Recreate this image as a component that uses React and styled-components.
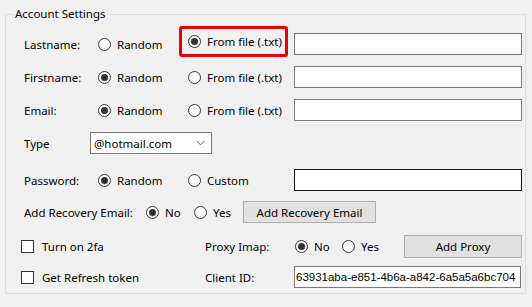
import styled, { createGlobalStyle } from "styled-components";

const GlobalStyle = createGlobalStyle`
    html, body {
        margin: 0;
        background: #f0f0f0;
    }
    body {
        font-family: "Noto Sans", "Open Sans", sans-serif;
        font-size: 11.5px;
        color: #000;
    }
`

const Page = styled.div`
    width: 532px;
    height: 307px;
    overflow: hidden;
    box-sizing: border-box;
    padding: 6px 6px 0 5px;
`

const Group = styled.fieldset`
    margin: 0;
    padding: 0 0 5px 0;
    border: 1px solid #dcdcdc;
    min-width: 0;
`

const Legend = styled.legend`
    margin-left: 7px;
    padding: 0 2px;
    line-height: 16px;
`

const Row = styled.div`
    display: flex;
    align-items: center;
    height: ${props => props.$h || 22}px;
    margin-top: ${props => props.$mt}px;
    padding-left: ${props => props.$pl || 18}px;
`

const Label = styled.span`
    width: ${props => props.$w}px;
    flex-shrink: 0;
    white-space: nowrap;
`

const Option = styled.label`
    display: flex;
    align-items: center;
    gap: 6px;
    width: ${props => props.$w ? props.$w + "px" : "auto"};
    flex-shrink: 0;
    white-space: nowrap;
`

const Circle = styled.span`
    width: 13px;
    height: 13px;
    box-sizing: border-box;
    border: 1px solid #333;
    border-radius: 50%;
    background: #fff;
    display: flex;
    align-items: center;
    justify-content: center;
    &::after {
        content: "";
        width: 7px;
        height: 7px;
        border-radius: 50%;
        background: #333;
        display: ${props => props.$on ? "block" : "none"};
    }
`

const Box = styled.span`
    width: 13px;
    height: 13px;
    box-sizing: border-box;
    border: 1px solid #333;
    background: #fff;
`

const Check = styled.label`
    display: flex;
    align-items: center;
    gap: 8px;
    width: ${props => props.$w}px;
    flex-shrink: 0;
`

const Highlight = styled.div`
    display: flex;
    align-items: center;
    box-sizing: border-box;
    width: 109px;
    height: 31px;
    margin: -7px 6px -2px -9px;
    padding-left: 6px;
    border: 3px solid #e8000b;
    border-radius: 3px;
    flex-shrink: 0;
`

const Field = styled.div`
    box-sizing: border-box;
    width: ${props => props.$w || 228}px;
    height: 22px;
    background: #fff;
    border: 1px solid ${props => props.$dark ? "#111" : "#7a7a7a"};
    font-family: "Liberation Sans", Arial, sans-serif;
    font-size: 11.5px;
    line-height: 20px;
    padding-left: 1px;
    white-space: nowrap;
    overflow: hidden;
`

const Select = styled.div`
    box-sizing: border-box;
    width: 122px;
    height: 22px;
    background: #fff;
    border: 1px solid #7a7a7a;
    display: flex;
    align-items: center;
    justify-content: space-between;
    padding: 0 6px 0 3px;
`

const Button = styled.div`
    box-sizing: border-box;
    width: ${props => props.$w}px;
    height: ${props => props.$h || 22}px;
    background: #e1e1e1;
    border: 1px solid #adadad;
    display: flex;
    align-items: center;
    justify-content: center;
    margin-left: ${props => props.$ml || 0}px;
`

const Radio = ({ on, w, children }) => (
    <Option $w={w}>
        <Circle $on={on} />
        {children}
    </Option>
)

const App = () => {
    return (
        <Page>
            <GlobalStyle />
            <Group>
                <Legend>Account Settings</Legend>

                <Row $mt={11}>
                    <Label $w={74}>Lastname:</Label>
                    <Radio w={90}>Random</Radio>
                    <Highlight>
                        <Radio on>From file (.txt)</Radio>
                    </Highlight>
                    <Field />
                </Row>

                <Row $mt={11}>
                    <Label $w={74}>Firstname:</Label>
                    <Radio on w={90}>Random</Radio>
                    <Radio w={106}>From file (.txt)</Radio>
                    <Field />
                </Row>

                <Row $mt={11}>
                    <Label $w={74}>Email:</Label>
                    <Radio on w={90}>Random</Radio>
                    <Radio w={106}>From file (.txt)</Radio>
                    <Field />
                </Row>

                <Row $mt={11}>
                    <Label $w={66}>Type</Label>
                    <Select>
                        <span>@hotmail.com</span>
                        <svg width="9" height="6" viewBox="0 0 9 6">
                            <path d="M0.5 0.8 L4.5 4.8 L8.5 0.8" fill="none" stroke="#555" strokeWidth="1" />
                        </svg>
                    </Select>
                </Row>

                <Row $mt={15}>
                    <Label $w={74}>Password:</Label>
                    <Radio on w={90}>Random</Radio>
                    <Radio w={106}>Custom</Radio>
                    <Field $dark />
                </Row>

                <Row $mt={10}>
                    <Label $w={122}>Add Recovery Email:</Label>
                    <Radio on w={48}>No</Radio>
                    <Radio w={49}>Yes</Radio>
                    <Button $w={133}>Add Recovery Email</Button>
                </Row>

                <Row $mt={12} $h={23} $pl={15}>
                    <Check $w={184}>
                        <Box />
                        Turn on 2fa
                    </Check>
                    <Label $w={90}>Proxy Imap:</Label>
                    <Radio on w={47}>No</Radio>
                    <Radio w={62}>Yes</Radio>
                    <Button $w={118} $h={23}>Add Proxy</Button>
                </Row>

                <Row $mt={8} $pl={15}>
                    <Check $w={184}>
                        <Box />
                        Get Refresh token
                    </Check>
                    <Label $w={89}>Client ID:</Label>
                    <Field $w={227}>63931aba-e851-4b6a-a842-6a5a5a6bc704</Field>
                </Row>
            </Group>
        </Page>
    );
}

export default App;
